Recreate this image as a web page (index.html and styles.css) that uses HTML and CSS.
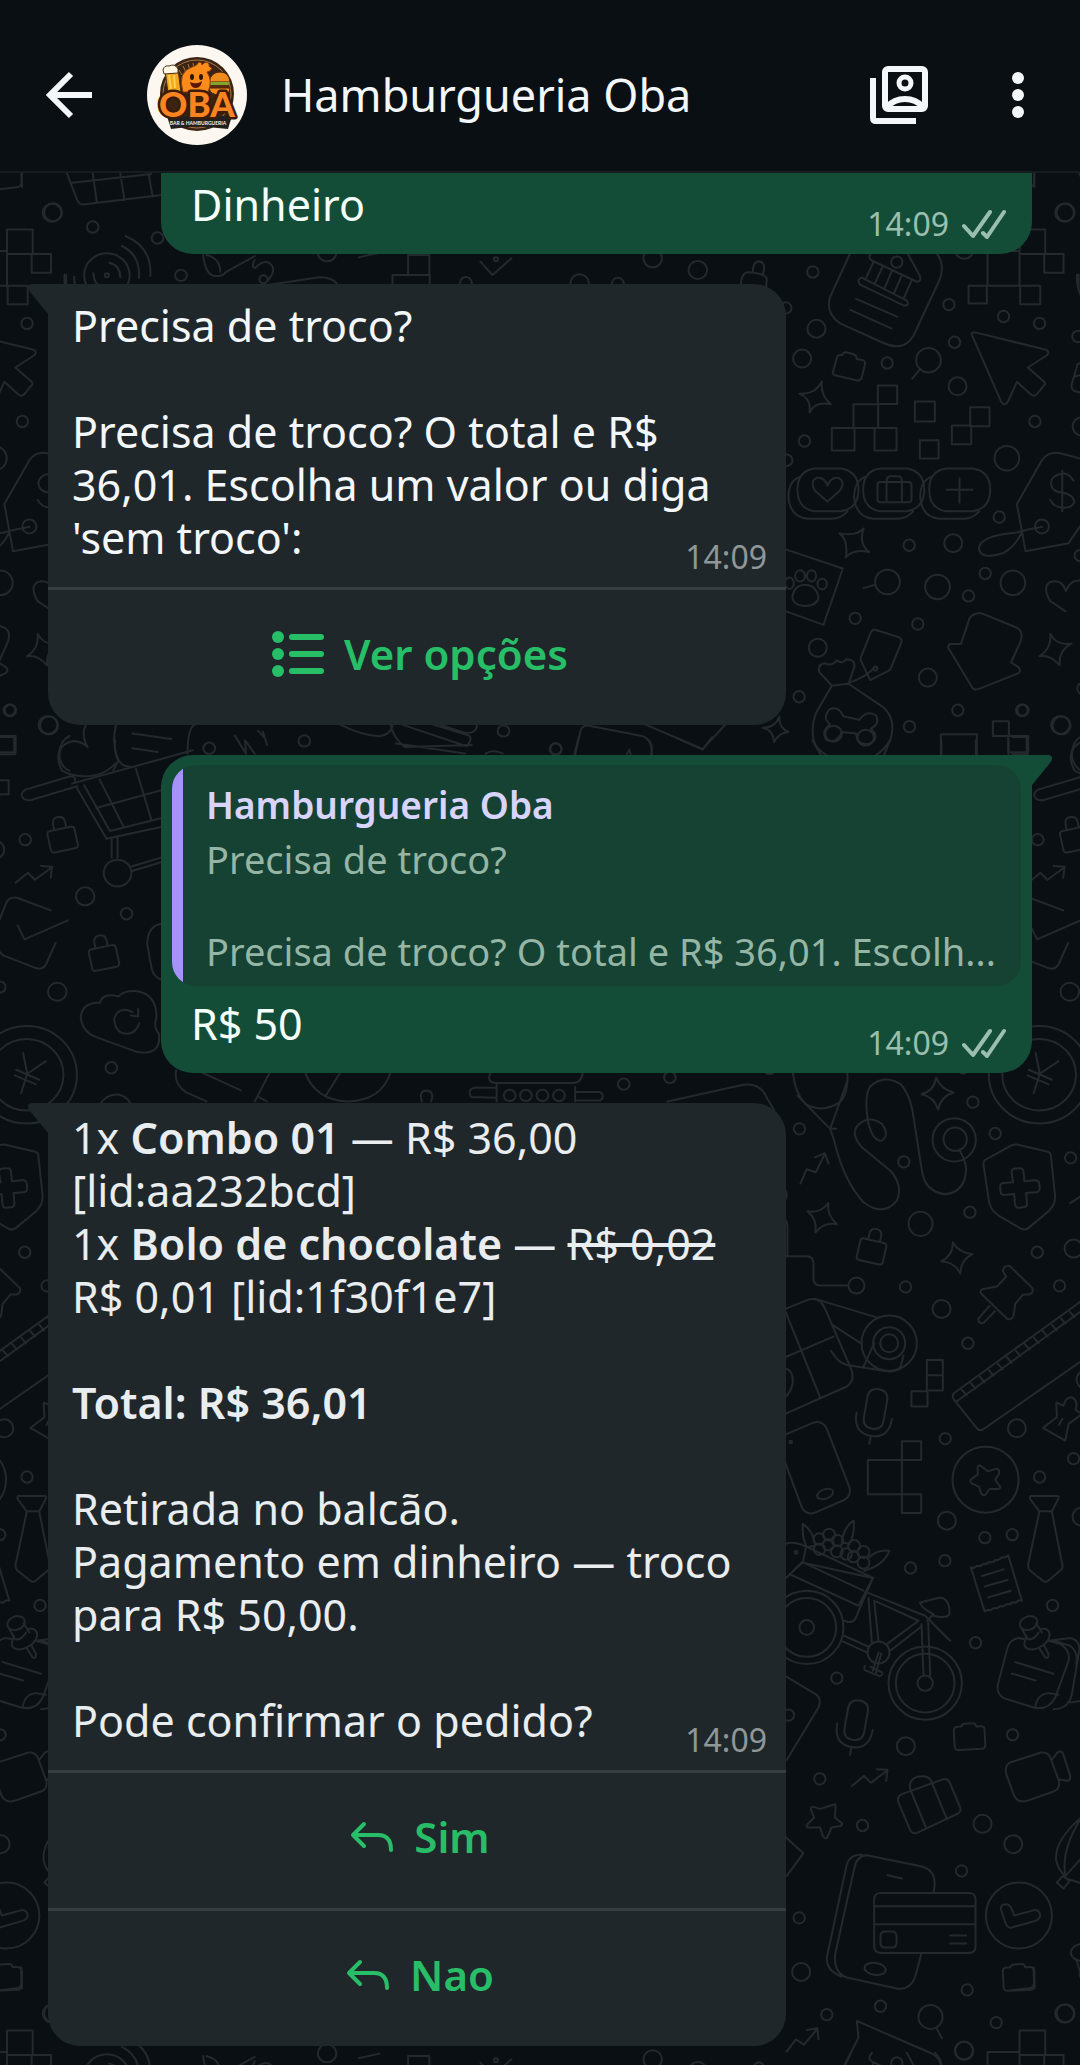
FILE: index.html
```html
<!DOCTYPE html>
<html lang="pt-BR">
  <head>
    <meta charset="UTF-8" />
    <meta name="viewport" content="width=device-width, initial-scale=1.0" />
    <title>Hamburgueria Oba</title>
    <link rel="stylesheet" href="styles.css">
  </head>
  <body>
    <!-- shared icons -->
    <svg class="icon-defs" aria-hidden="true">
      <symbol id="icon-checks" viewBox="0 0 46 30">
        <path d="M3 17l9 10L29 3M22 24l4 4L43 3" fill="none" stroke="currentColor" stroke-width="4" stroke-linecap="round" stroke-linejoin="round" />
      </symbol>
      <symbol id="icon-reply" viewBox="0 0 44 32">
        <path d="M14 3L3 14l11 11M4 14h24q13 0 13 15" fill="none" stroke="currentColor" stroke-width="4" stroke-linecap="round" stroke-linejoin="round" />
      </symbol>
    </svg>

    <header class="topbar">
      <button type="button" class="icon-btn back" aria-label="Voltar">
        <svg width="46" height="48" viewBox="0 0 46 48"><path d="M25 3L4 24l21 21M4 24h42" fill="none" stroke="currentColor" stroke-width="6" /></svg>
      </button>
      <svg class="avatar" viewBox="0 0 100 100" role="img" aria-label="Oba">
        <circle cx="50" cy="50" r="50" fill="#fdf7f1" />
        <circle cx="50" cy="49" r="37" fill="#3b2414" />
        <circle cx="50" cy="49" r="34" fill="none" stroke="#a5794d" stroke-width="1" />
        <path d="M32 25l3 5M36 21l3 6M41 19l2 6M46 18l1 6" stroke="#a5794d" stroke-width="1" />
        <!-- beer -->
        <path d="M18 25l13-1 3 24H21z" fill="#f6a81c" stroke="#4a3018" stroke-width="1" />
        <path d="M22 30l2 14M27 30l1 13" stroke="#ffd257" stroke-width="2" />
        <path d="M16 25q1-5 6-4 6-3 9 3l0 4-14 1z" fill="#fff6e4" stroke="#4a3018" stroke-width="1" />
        <!-- burger -->
        <path d="M62 37q2-10 11-10t10 10z" fill="#ef8a1d" stroke="#4a2408" stroke-width="1" />
        <path d="M61 37h22l-2 4H63z" fill="#7fa52f" />
        <path d="M62 40h20v4H62z" fill="#5a2a10" />
        <path d="M62 43h21q0 7-10 7t-11-7z" fill="#ef8a1d" stroke="#4a2408" stroke-width="1" />
        <!-- mascot -->
        <path d="M36 47q-6-20 9-25 5-1 7-5 3 0 3 3 4-5 7-1-1 3 3 4-2 4-5 4 6 9 1 20z" fill="#fb8b1b" stroke="#8c3d05" stroke-width="1" />
        <ellipse cx="45" cy="32" rx="2" ry="3" fill="#2a1307" />
        <ellipse cx="54" cy="32" rx="2" ry="3" fill="#2a1307" />
        <path d="M43 37q7 3 12-1-1 7-6 7t-6-6z" fill="#5b1607" />
        <path d="M20 71l4 13 26-3 31 3 4-13z" fill="#22201f" />
        <text class="logo-word" x="50" y="72" text-anchor="middle">OBA</text>
        <text class="logo-sub" x="51" y="80" text-anchor="middle">BAR &amp; HAMBURGUERIA</text>
      </svg>
      <h1 class="contact">Hamburgueria Oba</h1>
      <button type="button" class="icon-btn" aria-label="Contato">
        <svg width="58" height="58" viewBox="0 0 58 58" fill="none" stroke="currentColor" stroke-width="6">
          <rect x="15" y="3" width="40" height="40" rx="3" />
          <path d="M3 12v40q0 3 3 3h40" />
          <circle cx="35" cy="17" r="6" stroke-width="5" />
          <path d="M17 41q7-8 18-8t18 8" />
        </svg>
      </button>
      <button type="button" class="icon-btn more" aria-label="Mais opções">
        <svg width="12" height="48" viewBox="0 0 12 48" fill="currentColor"><circle cx="6" cy="7" r="6" /><circle cx="6" cy="24" r="6" /><circle cx="6" cy="41" r="6" /></svg>
      </button>
    </header>

    <main class="chat">
      <!-- wallpaper -->
      <svg class="wallpaper" viewBox="0 173 1080 1892" preserveAspectRatio="xMidYMin slice" aria-hidden="true">
        <defs>
          <ellipse id="s" rx="17" ry="14" />
          <ellipse id="m" rx="27" ry="22" />
          <ellipse id="l" rx="37" ry="30" />
          <circle id="cs" r="17" />
          <circle id="cm" r="27" />
          <path id="spark" d="M-4-48Q8-14 48-3Q10 8 2 48Q-10 10-48 2Q-10-8-4-48z" />
          <path id="trend" d="M-54 25L-18-5 2 16 50-20M20-25L52-23 48 10" />
          <path id="mic" d="M0-60q30 0 30 30v60q0 30-30 30t-30-30v-60q0-30 30-30zM-54 20q0 62 54 62t54-62M0 82v24" />
          <path id="camera" d="M-46-22q0-12 12-12h10q4-8 12-8h24q8 0 10 10h14q10 0 10 10v46q0 12-12 12h-68q-12 0-12-12z" />
          <path id="lock" d="M-30-20h60q10 0 10 10v46q0 10-10 10h-60q-10 0-10-10v-46q0-10 10-10zM-18-20v-16q0-20 18-20t18 20v16" />
          <g id="doodles">
            <!-- top left -->
            <g transform="scale(.3444 .3333)">
              <path d="M0 568L50 562Q65 560 63 540V500M195 520L225 600Q230 615 248 613L470 585M210 548L440 522M270 520l12 88M350 520l12 80M432 522l12 68" />
              <use href="#cm" x="152" y="638" /><use href="#cs" x="270" y="681" /><use href="#cs" x="458" y="714" /><use href="#cs" x="526" y="826" />
              <circle cx="311" cy="826" r="66" /><circle cx="311" cy="826" r="6" />
              <path d="M318 788q32 8 32 44M300 862q-28-8-28-42M365 708q78 34 72 120M355 738q54 28 49 95M188 824q-4 60 40 100M216 830q-2 44 30 78" />
              <path d="M590 765q8 66 40 63 20 0 26-12L740 768M600 765q40 10 40 50M740 780q-12 22 2 24 20-24 40-16 26 20-6 56M765 826a12 12 0 1 0 1 0M780 855L925 832Q960 830 978 850" />
              <use href="#cm" x="950" y="757" /><path d="M1042 772l60-14M1185 765h62v60h-62zM1140 825h108v28M1140 825v28M1395 785L1430 825 1485 775" />
              <circle cx="1440" cy="778" r="6" /><use href="#cs" x="1353" y="848" />
            </g>
            <g transform="translate(540 0) scale(.3444 .3333)">
              <use href="#cm" x="327" y="775" /><use href="#cm" x="458" y="810" /><use href="#cm" x="115" y="850" /><use href="#cs" x="226" y="850" />
              <path d="M1435 510v52" />
            </g>
            <!-- right side, upper -->
            <g transform="translate(720 160) scale(.3333 .4083)">
              <path d="M62 305Q65 275 85 275Q140 278 140 292L138 310M98 275Q98 248 118 248Q140 252 128 280" />
              <path d="M392 225L330 335Q315 375 360 400L490 448Q550 470 580 430L660 290Q675 250 645 225" />
              <path d="M455 225Q440 240 455 246L590 298Q605 298 598 282L560 225M425 288L560 344Q570 358 550 356L420 305Q408 292 425 288M460 250L437 290M487 262L463 304M515 272L492 316M545 283L520 328M575 294L550 340M408 340L532 384M390 367L515 413" />
              <path d="M898 170h77v60h-77zM972 230h58v46h-58zM802 223h96v85h-96zM745 308h55v43h-55zM900 308h60v45h-60z" />
              <path d="M755 428Q752 420 765 422L975 464Q990 468 980 478L923 508 972 543Q978 548 970 553L950 573Q942 580 932 574L890 543 864 590Q855 605 843 592z" />
              <path d="M338 520L350 485Q352 475 365 478Q370 468 385 472L402 476Q410 480 410 487L428 490Q437 493 434 502L425 532Q420 542 408 539L350 528Q335 525 338 520M600 512L576 535" />
              <path d="M238 572Q285 575 305 542Q300 575 332 598Q285 590 268 618Q275 585 238 572zM358 914Q410 922 430 902Q415 940 447 960Q400 950 377 973Q385 930 358 914zM990 1160Q1010 1190 1054 1184Q1015 1200 1018 1237Q990 1210 958 1215Q995 1195 990 1160zM178 1362Q175 1390 205 1400Q175 1402 162 1425Q160 1395 128 1390Q165 1390 178 1362z" />
              <path d="M473 552h58v45h-58zM400 598h74v58h-74zM335 656h68v55h-68zM463 656h66v55h-66zM584 591h60v49h-60zM750 605h58v47h-58zM695 650h58v46h-58zM599 686h56v45h-56z" />
              <path id="pill" d="M283 755H363Q415 762 415 807T363 860H283Q232 853 232 807T283 755zM240 775Q205 785 205 825Q210 875 263 878H335Q362 878 382 860" /><use href="#pill" x="197" /><use href="#pill" x="395" />
              <path d="M322 836L285 810Q268 785 290 778Q313 775 322 797Q332 775 355 778Q378 788 358 810zM480 788h86q8 0 8 8v34q0 8-8 8h-86q-8 0-8-8v-34q0-8 8-8zM499 788v50M545 788v50M499 788q0-14 12-14h24q10 0 10 14M679 807h78M718 779v60" />
              <path d="M1085 732L1020 718Q985 712 965 735L890 842 916 958 1045 938 1085 890M1060 785Q1045 765 1025 768 992 772 992 792 995 812 1025 814 1062 820 1062 838 1055 852 1028 851 1000 850 990 832M1026 760v100M966 898Q920 905 890 912 780 920 776 950 780 980 850 962 885 945 905 912" /><ellipse cx="965" cy="897" rx="21" ry="17" />
              <path d="M192 952L368 1000 310 1138 192 1103" /><ellipse cx="240" cy="1018" rx="15" ry="14" /><ellipse cx="274" cy="1018" rx="14" ry="14" /><ellipse cx="306" cy="1038" rx="14" ry="13" /><ellipse cx="208" cy="1036" rx="13" ry="14" /><path d="M256 1040Q285 1040 295 1068 295 1090 256 1092 215 1090 217 1066 225 1040 256 1040M430 1048L464 1040" />
              <path d="M1036 1105L990 1080Q965 1045 990 1033 1025 1024 1037 1055 1050 1025 1085 1030" />
              <path d="M688 1185Q680 1195 690 1202L755 1290Q762 1300 778 1294L890 1258Q905 1252 895 1242L873 1230 900 1180Q912 1155 890 1145L785 1110Q760 1108 748 1122L722 1185z" />
              <path d="M465 1150L535 1168Q548 1174 543 1182L510 1248 450 1273 422 1225Q420 1218 426 1210L450 1160Q455 1148 465 1150M465 1240Q440 1265 385 1280M465 1240a6 5 0 1 0 1 0" />
              <path d="M335 1287L298 1254Q290 1235 315 1232 335 1240 350 1225 368 1235 378 1222 405 1222 403 1240L385 1282 335 1287 290 1350Q265 1400 290 1440L305 1460M385 1282L490 1340Q530 1370 510 1420L490 1460" />
              <path d="M370 1362Q355 1335 328 1345 305 1365 330 1382 300 1400 320 1420 350 1430 365 1400L408 1404Q410 1430 440 1430 470 1425 465 1405L452 1392Q480 1380 468 1360 440 1345 418 1370z" />
              <path d="M662 1460v-54h108v54M818 1374h48v36h-48zM864 1410h60v40h-60z" />
              <path d="M1085 495L1072 500 1054 550Q1052 562 1064 566L1085 570M1064 530L1085 525M1085 1410Q1050 1425 1056 1465 1065 1490 1085 1495M1075 280v34" />
              <use href="#s" x="278" y="274" /><use href="#s" x="197" y="362" /><use href="#s" x="686" y="354" /><use href="#s" x="850" y="383" /><use href="#s" x="958" y="400" /><use href="#s" x="703" y="446" /><use href="#s" x="1073" y="432" /><use href="#s" x="501" y="497" /><use href="#s" x="253" y="688" /><use href="#s" x="944" y="640" /><use href="#s" x="200" y="735" /><use href="#s" x="837" y="874" /><use href="#s" x="567" y="943" /><use href="#s" x="795" y="1012" /><use href="#s" x="745" y="1067" /><use href="#s" x="405" y="1122" /><use href="#s" x="593" y="1136" /><use href="#s" x="237" y="1314" /><use href="#s" x="713" y="1347" /><use href="#s" x="908" y="1347" /><use href="#s" x="568" y="1387" /><use href="#s" x="1080" y="968" /><use href="#s" x="530" y="250" /><use href="#s" x="1088" y="1294" />
              <use href="#m" x="289" y="413" /><use href="#m" x="246" y="486" /><use href="#m" x="712" y="554" /><use href="#m" x="699" y="938" /><use href="#m" x="293" y="1194" /><use href="#m" x="623" y="1267" /><use href="#m" x="1024" y="1384" /><use href="#m" x="1036" y="128" /><use href="#m" x="732" y="220" /><use href="#m" x="1084" y="652" />
              <use href="#l" x="860" y="730" /><use href="#l" x="625" y="490" /><use href="#l" x="652" y="1045" /><use href="#l" x="878" y="1035" /><use href="#l" x="502" y="1033" />
            </g>
            <!-- strip between the second and third message -->
            <g transform="translate(0 270) scale(.3444 .3333)">
              <use href="#cs" x="28" y="1320" /><use href="#cm" x="140" y="1364" /><use href="#cs" x="608" y="1434" /><use href="#cs" x="884" y="1412" /><use href="#cs" x="1462" y="1382" />
              <path d="M250 1364Q235 1395 255 1430 215 1395 180 1430 160 1460 180 1500 200 1515 240 1518 300 1520 335 1480M338 1364Q325 1410 340 1460 350 1490 385 1490M385 1390L498 1406M385 1434L458 1445M565 1364Q545 1375 545 1450M682 1396L715 1450 712 1410 740 1450M750 1382L768 1402 764 1384 776 1424" />
              <path d="M990 1364Q1050 1395 1100 1398 1135 1395 1140 1364M1135 1364Q1140 1400 1175 1430L1370 1424M1170 1364L1355 1428Q1375 1405 1360 1395L1260 1364M1280 1364L1350 1388Q1385 1390 1385 1364M1150 1420L1350 1450M1410 1450q20-14 50 0" />
            </g>
            <g transform="translate(480 640) scale(.3333)">
              <path d="M285 345L302 270Q310 250 335 258L490 288Q525 305 512 345M470 242L668 326 740 248M440 342l8-14 4 14" />
              <use href="#cs" x="228" y="326" />
            </g>
            <!-- shopping cart and coin -->
            <g transform="translate(0 740) scale(.3444 .3333)">
              <path d="M210 130L560 30M225 145L310 295 560 240M245 135L320 272 540 215M290 118L360 260M395 85L440 238M280 203L540 130M218 125Q222 108 205 108L75 148Q55 160 70 176 80 182 95 178L225 138M325 295V352M342 290V352M378 380L480 348M384 392L480 362" /><circle cx="342" cy="398" r="40" />
              <path d="M330 90L345 60Q330 30 335 0" />
              <use href="#lock" transform="translate(180 285) rotate(-12)" /><use href="#lock" transform="translate(300 640) rotate(-12)" />
              <use href="#trend" transform="translate(100 402)" />
              <path d="M148 510L50 472Q25 468 18 490L-15 575Q-20 620 10 645L105 683Q125 690 135 670L162 608M52 555L72 597 198 540" />
              <path d="M470 550Q430 555 428 610L440 680Q445 710 470 718" />
              <path d="M290 787Q240 785 235 830 240 875 280 890L400 935Q470 945 462 880 445 860 455 830 455 760 395 752 360 750 345 768 300 755 290 787M385 815Q345 795 332 835 335 880 370 880 395 880 405 848M380 825L402 828 402 806" />
              <circle cx="78" cy="1003" r="146" /><circle cx="78" cy="1003" r="107" /><path d="M68 938L80 1000 62 1058M80 1000L134 962M48 988L115 1018M44 1005L105 1032" />
              <use href="#cs" x="74" y="298" /><use href="#cm" x="248" y="468" /><use href="#cs" x="368" y="520" /><use href="#cm" x="167" y="754" /><use href="#cs" x="0" y="740" /><use href="#cm" x="-14" y="328" /><use href="#cs" x="324" y="982" />
              <path d="M0-10H42V42H0M0 120H26V162H0" />
              <path d="M292 1090Q310 1060 345 1062 370 1068 380 1090M512 990Q505 1030 540 1055L600 1083M580 993L700 1050M785 993L740 1083M748 1068L775 1083M885 993Q915 1080 1010 1083 1110 1080 1135 993M990 993L945 1068M1225 1083Q1215 1050 1240 1050 1262 1052 1252 1083M1425 995Q1410 1028 1445 1028H1660Q1690 1028 1692 995M1442 1030V1083M1442 1042H1380Q1355 1045 1368 1070L1442 1072" />
              <use href="#cs" x="1480" y="1065" /><use href="#cs" x="1527" y="1065" /><use href="#cs" x="1575" y="1065" /><use href="#cs" x="1623" y="1065" />
            </g>
            <g transform="translate(540 740) scale(.3444 .3333)">
              <path d="M102 1040V1083M102 1055H175Q190 1068 175 1080H102M370 1083L590 1033Q640 1025 660 1075L680 1110M400-5L472 28 500-10M790 0Q820 60 905 65 985 60 1015 0M1165 0V42M1265 0V42M1360 0V42M1415 0V42M100 42L112-10M325 42Q325 10 310-5" />
              <circle cx="852" cy="-20" r="24" /><circle cx="945" cy="-8" r="24" />
              <use href="#cs" x="45" y="26" /><use href="#cs" x="243" y="1031" /><use href="#cs" x="377" y="1011" /><use href="#cs" x="666" y="984" /><use href="#cs" x="1228" y="982" />
              <path d="M734 996Q740 1060 770 1090 820 1120 870 1085 895 1060 892 996" />
            </g>
            <!-- stethoscope, phone, tools -->
            <g transform="translate(720 1080) scale(.3333)">
              <path d="M232 45L330 145 382 0M330 145L342 180Q370 300 430 365 490 410 530 360 550 315 510 270L425 200Q385 155 420 128 450 105 485 130 510 165 485 180 460 185 445 130 430 50 450 18 490-20 540 10 570 40 580 110L605 270Q615 335 675 341 735 335 738 265 735 235 718 210M330 145h18" />
              <circle cx="702" cy="178" r="65" /><circle cx="705" cy="176" r="35" />
              <use href="#trend" transform="translate(278 262) rotate(-27)" /><use href="#spark" transform="translate(652 39)" /><use href="#spark" transform="translate(306 412) rotate(27)" /><use href="#spark" transform="translate(710 532) rotate(-10)" />
              <use href="#lock" transform="translate(457 500) rotate(13)" />
              <path d="M795 238L875 194Q887 190 900 194L980 213Q992 216 992 226L1004 340Q1008 370 985 392L925 442Q913 452 898 442L835 405Q810 388 806 360L790 255Q788 244 795 238z" />
              <path d="M878 275q0-12 12-12h12q12 0 12 12v28h30q14 0 14 12v12q0 12-12 12h-30v30q0 12-12 12h-12q-12 0-12-12v-30h-28q-12 0-12-12v-12q0-12 12-12h28z" transform="rotate(-5 901 320)" />
              <path d="M192 415Q202 420 202 440V527M195 527H260Q280 527 280 550V595Q280 615 305 615H384M195 330q10 10 0 30M1050 368L1085 345" /><circle cx="409" cy="615" r="24" />
              <path d="M195 685L265 657Q300 648 315 685L395 870Q405 905 375 920L195 1000M195 690L300 950M195 830L340 768M285 655L475 712M340 735L425 790M332 810Q355 850 385 854L505 873Q530 873 542 858L550 825M430 858L462 788M195 862Q220 870 218 905 215 930 195 950" />
              <circle cx="507" cy="788" r="83" /><circle cx="507" cy="788" r="48" /><circle cx="507" cy="788" r="27" />
              <path d="M848 572Q850 555 868 556L936 622Q942 638 925 642L908 642 885 670 880 705Q874 718 862 716L782 638Q778 628 790 625L830 618 858 588zM808 676L774 715Q775 732 790 727L824 692" />
              <path d="M1085 660L705 935Q692 945 702 958L770 1043Q780 1054 792 1044L1085 840M710 962L1085 690M725 928l14 16M752 908l14 16M779 889l14 16M806 869l14 16M833 850l14 16M860 830l14 16M887 811l14 16M914 791l14 16M941 772l14 16M968 752l14 16M995 733l14 16M1022 713l14 16M1049 694l14 16" />
              <use href="#mic" transform="translate(466 985) rotate(10)" />
              <path d="M620 838h48v46h-48zM620 884h48v46h-48zM574 932h48v46h-48zM545 1082h58v56h-58zM443 1138h102v103H443zM545 1241h58v56h-58zM545 1138v103" />
              <path d="M195 1062L280 1026Q308 1018 320 1045L388 1220Q395 1245 372 1258L285 1296Q258 1305 245 1280L195 1145" /><ellipse cx="315" cy="1240" rx="25" ry="14" transform="rotate(-20 315 1240)" /><circle cx="212" cy="1084" r="4" />
              <circle cx="796" cy="1197" r="99" /><path d="M780 1155L803 1172 830 1164Q840 1168 836 1180L825 1198 840 1218Q840 1226 828 1225L808 1225 795 1243Q786 1246 782 1236L776 1218 754 1208Q746 1200 756 1193L773 1182 772 1162Q774 1152 780 1155z" />
              <path d="M932 1246H1012Q1018 1248 1014 1255L995 1292H957L930 1255Q928 1248 932 1246M957 1294L923 1455Q924 1465 930 1470L968 1500Q976 1506 984 1500L1022 1468Q1028 1462 1027 1455L995 1294" />
              <path d="M1008 966L1030 975Q1035 950 1055 950 1075 960 1066 988L1085 1000 1045 1030 1035 1080 968 1042 1010 1010zM1026 1015l-10 18" />
              <path d="M248 1330Q280 1350 285 1395L260 1400Q245 1370 248 1330M400 1320Q370 1340 365 1385L388 1390Q405 1360 400 1320M448 1430Q470 1405 508 1410 490 1455 432 1470M195 1390Q220 1380 258 1398L460 1492M258 1398L248 1445 220 1470M248 1445L430 1530" />
              <circle cx="297" cy="1375" r="17" /><circle cx="327" cy="1362" r="18" /><circle cx="298" cy="1406" r="17" /><circle cx="325" cy="1392" r="17" /><circle cx="352" cy="1380" r="17" /><circle cx="350" cy="1412" r="18" /><circle cx="378" cy="1420" r="17" /><circle cx="402" cy="1396" r="18" /><circle cx="400" cy="1428" r="17" /><circle cx="430" cy="1414" r="18" /><circle cx="430" cy="1446" r="18" /><circle cx="228" cy="1415" r="4" />
              <path d="M752 1460q10 5 18-5 10 5 18-5 10 3 18-6 12 3 20-6 10 3 18-8 10 3 20-6L905 1560q-10-4-18 6-10-4-18 5-10-4-20 6-10-3-18 6-10-4-20 6-8-3-18 3zM785 1486L850 1466M794 1517L862 1498M804 1550L872 1530" />
              <use href="#cs" x="238" y="145" /><use href="#cs" x="758" y="65" /><use href="#cs" x="825" y="159" /><use href="#cs" x="551" y="244" /><use href="#cs" x="1051" y="232" /><use href="#cs" x="749" y="395" /><use href="#cs" x="951" y="515" /><use href="#cs" x="556" y="619" /><use href="#cs" x="1018" y="616" /><use href="#cs" x="743" y="788" /><use href="#cs" x="675" y="1074" /><use href="#cs" x="1060" y="1134" /><use href="#cs" x="958" y="1189" /><use href="#cs" x="794" y="1371" /><use href="#cs" x="876" y="1362" /><use href="#cs" x="674" y="1440" /><use href="#cs" x="571" y="1462" />
              <circle cx="601" cy="430" r="36" /><use href="#cm" x="1060" y="504" /><use href="#cm" x="664" y="685" /><use href="#cm" x="890" y="1043" /><use href="#cm" x="680" y="1320" /><use href="#cm" x="1084" y="1308" /><use href="#cm" x="1096" y="897" />
            </g>
            <!-- bicycle, card, notes -->
            <g transform="translate(720 1560) scale(.3333)">
              <circle cx="260" cy="200" r="22" /><circle cx="260" cy="200" r="88" /><circle cx="260" cy="200" r="110" /><circle cx="615" cy="367" r="23" /><circle cx="615" cy="367" r="88" /><circle cx="615" cy="367" r="110" />
              <path d="M195 55L245 5 458 52 415 135 208 40M458 52L405 175Q395 190 372 180M440 95L615 165 690 240M445 112L455 245M462 120L475 240M467 122L595 180 500 250M600 200L510 270M372 225L445 258M368 242L440 275M604 190L610 345M624 185L630 345M620 180L640 160Q600 140 600 125L660 110Q690 115 688 160 680 175 640 165" />
              <circle cx="475" cy="275" r="33" /><path d="M475 275L458 330M483 278L468 335M435 315Q428 325 438 330L478 346Q488 345 486 335L450 318" />
              <path d="M195 345L290 402Q305 418 295 440L200 597M195 828L250 877 200 945" />
              <use href="#mic" transform="translate(408 478) rotate(10)" /><use href="#trend" transform="translate(450 650)" /><use href="#trend" transform="translate(246 1436) rotate(-13)" />
              <use href="#camera" transform="translate(748 530) rotate(-3)" /><use href="#camera" transform="translate(895 1252) rotate(-3)" />
              <path d="M895 232Q870 235 862 260L832 375Q830 400 850 412L940 440Q985 450 1005 410L1045 300Q1050 265 1020 250L985 240M895 232L910 235M945 440Q950 400 985 397L1015 402M985 240L1050 232Q1085 240 1075 280L1055 400Q1045 445 1000 445M1000 240L1050 255Q1075 275 1068 310M1050 425L1085 420M885 304L1000 339M874 338L946 359" />
              <ellipse cx="925" cy="187" rx="27" ry="20" transform="rotate(-20 925 187)" /><path d="M905 205L922 235M948 188L965 215M922 235Q940 240 955 215M960 205Q990 200 988 225 985 250 945 265 915 270 912 250L918 225M957 262L975 290Q985 295 985 280L972 255" />
              <path d="M870 605L960 576Q985 572 992 595L1016 660Q1020 685 1000 692L920 720Q890 728 880 700L858 640Q852 615 870 605M994 598L1012 575Q1022 568 1028 578L1050 645Q1050 660 1040 660L1015 655" />
              <path d="M545 700L670 655Q682 652 688 664L720 740Q724 752 714 758L590 816Q578 820 570 808L533 720Q532 706 545 700M573 692L618 802M636 668L680 775M573 692Q560 660 590 648 630 640 636 668" />
              <path d="M300 744L345 730Q348 735 344 770L366 788Q365 795 358 796L334 800 322 828Q315 838 308 825L300 800 262 800Q256 795 262 790L282 770 272 745Q273 737 280 738z" />
              <path d="M425 882Q390 880 380 910L320 1190Q318 1230 365 1247M640 995Q655 930 605 917L440 883Q410 885 403 920L345 1180Q340 1235 380 1250L530 1283Q575 1288 587 1240L603 1180M502 943L545 953M480 996H748Q766 998 766 1016V1156Q766 1176 746 1176H480Q462 1174 462 1156V1016Q462 998 480 996M462 1036H766M462 1090H766M495 1112h20q14 0 14 14v20q0 14-14 14h-20q-14 0-14-14v-20q0-14 14-14M690 1124h48M690 1148h48" /><ellipse cx="465" cy="1224" rx="32" ry="18" transform="rotate(8 465 1224)" />
              <circle cx="896" cy="1064" r="99" /><path d="M842 1045Q840 1030 860 1030 872 1030 882 1064L945 1047Q960 1050 960 1065 958 1075 945 1080L875 1100Q862 1102 857 1090z" />
              <path d="M1085 768Q1000 840 1008 900 1015 930 1036 945 1020 870 1085 768M1036 945L1085 890M1045 955L1085 968M1010 965L1028 945 1048 960 1030 983zM1085 1148Q1050 1155 1052 1180 1060 1200 1085 1200M1068 1195L1085 1250" />
              <path d="M372 1515L415 1430 410 1380 640 1480Q660 1495 662 1515" /><circle cx="631" cy="1368" r="36" /><path d="M648 1400L665 1432" />
              <use href="#cs" x="997" y="134" /><use href="#cs" x="766" y="246" /><use href="#cs" x="350" y="352" /><use href="#cs" x="877" y="522" /><use href="#cs" x="299" y="654" /><use href="#cs" x="427" y="794" /><use href="#cs" x="724" y="930" /><use href="#cs" x="237" y="1071" /><use href="#cs" x="741" y="1287" /><use href="#cs" x="481" y="1336" /><use href="#cs" x="320" y="1361" /><use href="#cs" x="828" y="1385" /><use href="#cs" x="205" y="463" />
              <use href="#cm" x="557" y="556" /><use href="#cm" x="787" y="789" /><use href="#cm" x="879" y="850" /><use href="#cm" x="243" y="1233" /><use href="#cm" x="731" y="1469" />
            </g>
          </g>
        </defs>
        <use href="#doodles" /><use href="#doodles" x="-1012" /><use href="#doodles" x="1012" />
        <use href="#doodles" y="1800" /><use href="#doodles" x="-1012" y="1800" /><use href="#doodles" x="1012" y="1800" />
      </svg>

      <!-- messages -->
      <article class="bubble sent cut">
        <p class="text">Dinheiro <span class="meta">14:09 <svg class="checks" width="46" height="30"><use href="#icon-checks" /></svg></span></p>
      </article>

      <article class="bubble received">
        <svg class="tail" viewBox="0 0 20 30"><path d="M20 0H4Q-3 1 2 8L20 30z" /></svg>
        <p class="text titled">Precisa de troco?<br><br>Precisa de troco? O total e R$ 36,01. Escolha um valor ou diga 'sem troco': <span class="meta">14:09</span></p>
        <button type="button" class="action">
          <svg width="52" height="48" viewBox="0 0 52 48"><g fill="currentColor"><circle cx="6" cy="7" r="6" /><circle cx="6" cy="24" r="6" /><circle cx="6" cy="41" r="6" /></g><path d="M20 7h29M20 24h29M20 41h29" stroke="currentColor" stroke-width="6" stroke-linecap="round" /></svg>
          Ver opções
        </button>
      </article>

      <article class="bubble sent reply">
        <svg class="tail" viewBox="0 0 20 30"><path d="M0 0h16q7 1 2 8L0 30z" /></svg>
        <blockquote class="quote">
          <strong class="quote-name">Hamburgueria Oba</strong>
          Precisa de troco?<br><br>Precisa de troco? O total e R$ 36,01. Escolh...
        </blockquote>
        <p class="text">R$ 50 <span class="meta">14:09 <svg class="checks" width="46" height="30"><use href="#icon-checks" /></svg></span></p>
      </article>

      <article class="bubble received order">
        <svg class="tail" viewBox="0 0 20 30"><path d="M20 0H4Q-3 1 2 8L20 30z" /></svg>
        <p class="text">1x <b>Combo 01</b> — R$ 36,00<br>[lid:aa232bcd]<br>1x <b>Bolo de chocolate</b> — <s>R$ 0,02</s><br>R$ 0,01 [lid:1f30f1e7]<br><br><b>Total: R$ 36,01</b><br><br>Retirada no balcão.<br>Pagamento em dinheiro — troco para R$ 50,00.<br><br>Pode confirmar o pedido? <span class="meta">14:09</span></p>
        <button type="button" class="action"><svg width="44" height="32"><use href="#icon-reply" /></svg> Sim</button>
        <button type="button" class="action"><svg width="44" height="32"><use href="#icon-reply" /></svg> Nao</button>
      </article>
    </main>
  </body>
</html>
```
FILE: styles.css
```css
* {
  box-sizing: border-box;
}

body {
  margin: 0;
  background: #0a0f13;
  color: #f4f7fa;
  font-family: "Noto Sans", "Open Sans", sans-serif;
  font-size: 43px;
}

button {
  font: inherit;
  border: 0;
  background: none;
  padding: 0;
  cursor: pointer;
}

p,
h1,
blockquote {
  margin: 0;
}

svg {
  display: block;
  flex: none;
}

.icon-defs {
  display: none;
}

/* top bar */
.topbar {
  display: flex;
  align-items: center;
  height: 173px;
  padding: 18px 56px 0 46px;
  border-bottom: 2px solid #161c20;
}

.icon-btn {
  color: #f4f7fa;
}

.more {
  margin-left: 84px;
}

.avatar {
  width: 100px;
  height: 100px;
  margin: 0 34px 0 55px;
}

.logo-word {
  font-family: Lato, sans-serif;
  font-weight: 900;
  font-size: 35px;
  fill: #fb8420;
  stroke: #3a1c0a;
  stroke-width: 5px;
  stroke-linejoin: round;
  paint-order: stroke;
}

.logo-sub {
  font-family: Lato, sans-serif;
  font-weight: 700;
  font-size: 5px;
  fill: #f5efe8;
}

.contact {
  flex: 1;
  font-size: 45px;
  font-weight: 400;
  line-height: 60px;
  white-space: nowrap;
}

/* conversation */
.chat {
  position: relative;
  display: flex;
  flex-direction: column;
  gap: 30px;
  min-height: calc(100vh - 173px);
  padding: 0 48px 20px;
  overflow: hidden;
}

.wallpaper {
  position: absolute;
  inset: 0;
  width: 100%;
  height: 100%;
  fill: none;
  stroke: #23292d;
  stroke-width: 2px;
  stroke-linejoin: round;
  stroke-linecap: round;
}

.wallpaper path,
.wallpaper circle,
.wallpaper ellipse {
  vector-effect: non-scaling-stroke;
}

.bubble {
  position: relative;
  border-radius: 32px;
}

.received {
  width: 75%;
  border-top-left-radius: 0;
  background: #1f272a;
  color: #f4f7fa;
}

.sent {
  margin-left: 113px;
  border-top-right-radius: 0;
  background: #144d37;
  color: #f4fffa;
}

.cut {
  border-radius: 0 0 32px 32px;
}

.reply {
  padding-top: 10px;
}

.tail {
  position: absolute;
  top: 0;
  width: 20px;
  height: 30px;
}

.received .tail {
  right: 100%;
  fill: #1f272a;
}

.sent .tail {
  left: 100%;
  fill: #144d37;
}

.text {
  padding: 5px 43px 23px 24px;
  line-height: 53px;
}

.titled {
  padding-top: 15px;
}

.sent .text {
  padding-left: 30px;
}

.order .text {
  padding-top: 8px;
  color: #e9edef;
}

.meta {
  float: right;
  display: flex;
  align-items: center;
  gap: 12px;
  height: 34px;
  margin: 29px -24px 0 0;
  font-size: 32px;
  line-height: 34px;
  color: #8f9799;
}

.sent .meta {
  margin-right: -18px;
  color: #9bbfae;
}

.text b {
  font-weight: 600;
}

.action {
  display: flex;
  align-items: center;
  justify-content: center;
  gap: 20px;
  width: 100%;
  height: 138px;
  padding: 0 0 8px 6px;
  border-top: 3px solid #363d41;
  color: #27be67;
  font-size: 42px;
  font-weight: 600;
}

/* quoted message */
.quote {
  margin: 0 11px 6px;
  padding: 12px 20px 12px 34px;
  border-radius: 24px;
  background: linear-gradient(to right, #a791fb 11px, #154233 11px);
  font-size: 38px;
  line-height: 46px;
  color: #95b5a5;
}

.quote-name {
  display: block;
  padding: 5px 0 8px;
  font-size: 37px;
  font-weight: 600;
  color: #d9d4fd;
}
```
